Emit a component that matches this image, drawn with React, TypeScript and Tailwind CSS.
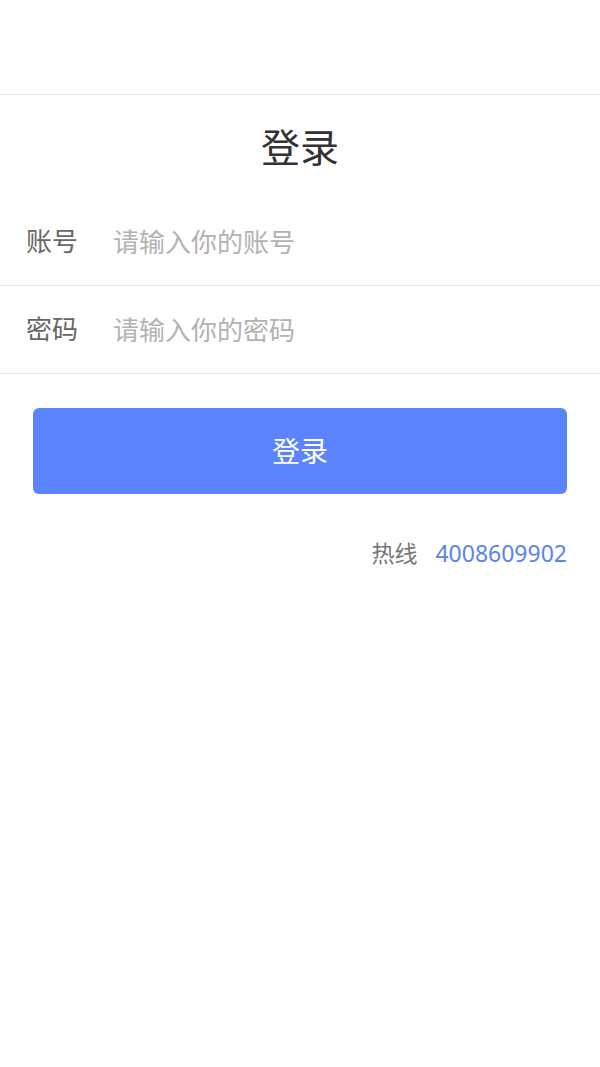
import { useState } from "react";

const font = {
  fontFamily: '"Noto Sans", Roboto, "Noto Sans CJK SC", sans-serif',
};

function Field({
  label,
  placeholder,
  type,
}: {
  label: string;
  placeholder: string;
  type: string;
}) {
  const [value, setValue] = useState("");
  return (
    <div className="flex h-[88px] items-center border-b border-[#e6e6e6] px-[26px]">
      <span className="w-[87px] shrink-0 text-[26px] text-[#666666]">
        {label}
      </span>
      <input
        type={type}
        value={value}
        onChange={(e) => setValue(e.target.value)}
        placeholder={placeholder}
        className="h-full flex-1 bg-transparent text-[26px] text-[#333333] outline-none placeholder:text-[#b2b2b2]"
        style={font}
      />
    </div>
  );
}

export default function App() {
  return (
    <div className="min-h-[1067px] w-full bg-white" style={font}>
      <div className="h-[95px] border-b border-[#e8e8e8] bg-white" />
      <div className="flex h-[103px] items-center justify-center">
        <h1 className="text-[39px] leading-none text-[#333333]">登录</h1>
      </div>
      <Field label="账号" placeholder="请输入你的账号" type="text" />
      <Field label="密码" placeholder="请输入你的密码" type="password" />
      <div className="px-[33px] pt-[34px]">
        <button className="flex h-[86px] w-full items-center justify-center rounded-[6px] bg-[#5b83fd] text-[28px] text-white">
          登录
        </button>
      </div>
      <div className="mt-[43px] flex h-[32px] items-center justify-end gap-[18px] pr-[33px]">
        <span className="text-[23px] text-[#777777]">热线</span>
        <span className="text-[23px] text-[#5b83f0]">4008609902</span>
      </div>
    </div>
  );
}
